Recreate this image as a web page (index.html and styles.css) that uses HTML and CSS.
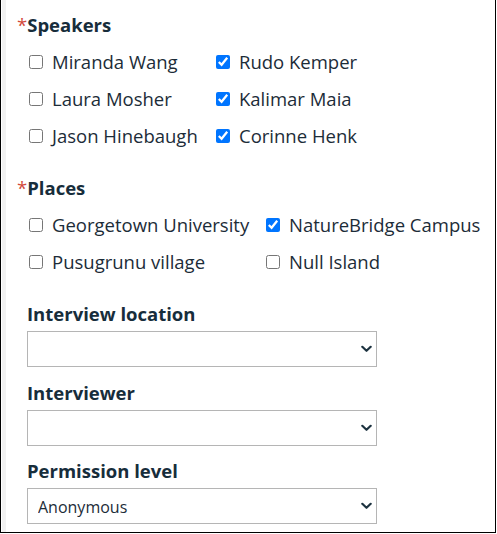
FILE: index.html
```html
<!DOCTYPE html>
<html lang="en">
<head>
<meta charset="utf-8">
<title>Interview form</title>
<link rel="stylesheet" href="styles.css">
</head>
<body>
<div class="frame">
  <div class="content">
    <fieldset class="group">
      <legend class="group-title"><span class="req">*</span>Speakers</legend>
      <div class="options options-speakers">
        <label class="option"><input type="checkbox"><span>Miranda Wang</span></label>
        <label class="option"><input type="checkbox" checked><span>Rudo Kemper</span></label>
        <label class="option"><input type="checkbox"><span>Laura Mosher</span></label>
        <label class="option"><input type="checkbox" checked><span>Kalimar Maia</span></label>
        <label class="option"><input type="checkbox"><span>Jason Hinebaugh</span></label>
        <label class="option"><input type="checkbox" checked><span>Corinne Henk</span></label>
      </div>
    </fieldset>
    <fieldset class="group group-places">
      <legend class="group-title"><span class="req">*</span>Places</legend>
      <div class="options options-places">
        <label class="option"><input type="checkbox"><span>Georgetown University</span></label>
        <label class="option"><input type="checkbox" checked><span>NatureBridge Campus</span></label>
        <label class="option"><input type="checkbox"><span>Pusugrunu village</span></label>
        <label class="option"><input type="checkbox"><span>Null Island</span></label>
      </div>
    </fieldset>
    <div class="field field-first">
      <label class="field-label" for="loc">Interview location</label>
      <div class="select-wrap">
        <select id="loc" class="select"><option></option></select>
        <svg class="chevron" width="11" height="8" viewBox="0 0 11 8"><path d="M1.3 1.8 L5.5 5.8 L9.7 1.8" fill="none" stroke="#1d3340" stroke-width="2.2" stroke-linecap="round" stroke-linejoin="round"/></svg>
      </div>
    </div>
    <div class="field">
      <label class="field-label" for="interviewer">Interviewer</label>
      <div class="select-wrap">
        <select id="interviewer" class="select"><option></option></select>
        <svg class="chevron" width="11" height="8" viewBox="0 0 11 8"><path d="M1.3 1.8 L5.5 5.8 L9.7 1.8" fill="none" stroke="#1d3340" stroke-width="2.2" stroke-linecap="round" stroke-linejoin="round"/></svg>
      </div>
    </div>
    <div class="field field-last">
      <label class="field-label" for="perm">Permission level</label>
      <div class="select-wrap">
        <select id="perm" class="select"><option>Anonymous</option></select>
        <svg class="chevron" width="11" height="8" viewBox="0 0 11 8"><path d="M1.3 1.8 L5.5 5.8 L9.7 1.8" fill="none" stroke="#1d3340" stroke-width="2.2" stroke-linecap="round" stroke-linejoin="round"/></svg>
      </div>
    </div>
  </div>
</div>
</body>
</html>
```
FILE: styles.css
```css
* { box-sizing: border-box; }
html, body {
  margin: 0;
  padding: 0;
  background: #fff;
  overflow: hidden;
}
body {
  font-family: "Open Sans", "Noto Sans", sans-serif;
  color: #1c2c38;
}
.frame {
  width: 496px;
  height: 534px;
  margin-top: -1px;
  border: 1px solid #000;
  background: #fff;
}
.content {
  height: 100%;
  margin-left: 1px;
  border-left: 4px solid #f1f1f1;
  padding: 13px 0 0 11px;
}
.group {
  border: 0;
  margin: 0;
  padding: 0;
  min-width: 0;
}
.group-places {
  margin-top: 22px;
}
.group-title {
  padding: 0;
  margin: 0;
  font-weight: 700;
  font-size: 18.5px;
  line-height: 24px;
  color: #172d3b;
}
.req {
  color: #d2493b;
  font-weight: 400;
}
.options {
  display: grid;
  margin-top: 6px;
  padding-left: 12px;
}
.options-speakers { grid-template-columns: 187px auto; }
.options-places { grid-template-columns: 237px auto; }
.option {
  display: flex;
  align-items: center;
  height: 37px;
  font-size: 18.5px;
  color: #1c2c38;
  white-space: nowrap;
}
.option input {
  width: 14px;
  height: 14px;
  margin: 0 9px 0 0;
}
.field { padding-left: 10px; margin-top: 14px; }
.field-first { margin-top: 22px; }
.field-last { margin-top: 13px; }
.field-label {
  display: block;
  font-weight: 700;
  font-size: 18.5px;
  line-height: 24px;
  color: #172d3b;
}
.select-wrap {
  position: relative;
  width: 350px;
  margin-top: 5px;
}
.select {
  display: block;
  width: 100%;
  height: 36px;
  appearance: none;
  -webkit-appearance: none;
  border: 1px solid #b5b5b5;
  border-radius: 0;
  background: #fff;
  padding: 2px 30px 0 10px;
  font-family: "Open Sans", "Noto Sans", sans-serif;
  font-size: 16px;
  color: #1c2c38;
}
.chevron {
  position: absolute;
  right: 5px;
  top: 14px;
}
```
